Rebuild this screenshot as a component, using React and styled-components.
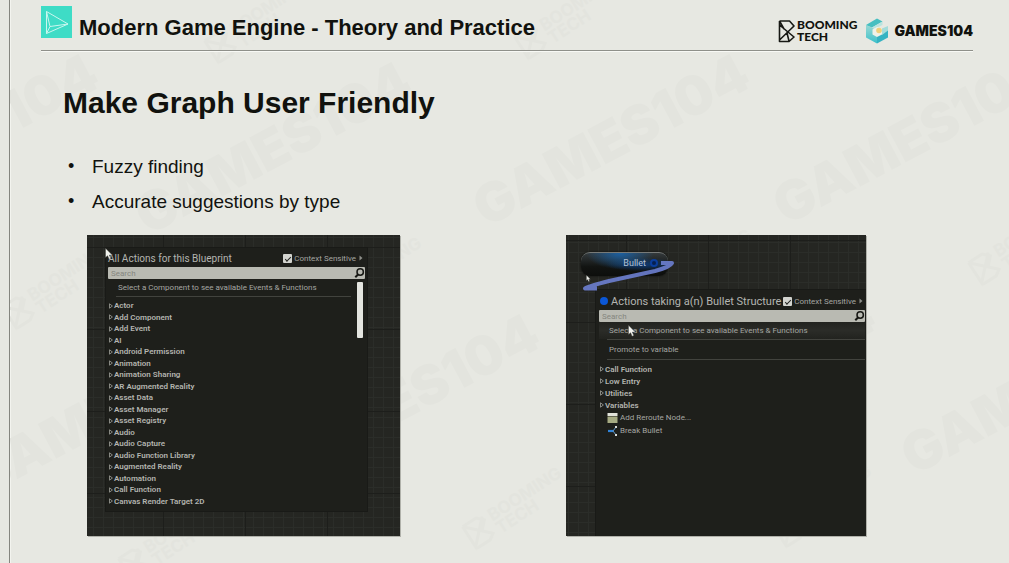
import React from "react";
import styled, { createGlobalStyle } from "styled-components";

const GlobalStyle = createGlobalStyle`
  *, *::before, *::after { box-sizing: border-box; }
  body {
    margin: 0;
    background: #e7e8e2;
    font-family: "Liberation Sans", Arial, sans-serif;
    color: #11120e;
  }
  button, input { font: inherit; color: inherit; }
`;

const Slide = styled.div`
  position: relative;
  min-height: 100vh;
  margin-left: 9px;
  border-left: 1px solid #85867f;
  padding: 0 36px 24px 31px;
  overflow: hidden;
  box-shadow: inset 1px 0 0 #f3f4ef;
`;

const Watermark = styled.svg`
  position: absolute;
  top: 0;
  left: -10px;
  width: 1009px;
  height: 563px;
  pointer-events: none;
  font-family: Inter, sans-serif;
  font-weight: 900;
  fill: #e3e4de;
`;

const Header = styled.header`
  position: relative;
  display: flex;
  align-items: flex-start;
  height: 51px;
  padding-top: 6px;
  border-bottom: 1px solid #8f908a;
  box-shadow: 0 1px 0 #f8f9f5;
`;

const CourseIcon = styled.svg`
  width: 31px;
  height: 32px;
  margin-right: 7px;
  flex: none;
`;

const CourseTitle = styled.div`
  font-size: 22px;
  font-weight: 700;
  line-height: 44px;
  height: 44px;
  white-space: nowrap;
`;

const Brands = styled.div`
  display: flex;
  align-items: center;
  height: 28px;
  margin-top: 11px;
  margin-left: auto;
  font-family: Inter, sans-serif;
`;

const BoomingMark = styled.svg`
  width: 17px;
  height: 23px;
  margin-right: 2px;
`;

const BoomingName = styled.div`
  font-family: Lato, sans-serif;
  font-size: 12px;
  font-weight: 900;
  line-height: 12px;
  margin-right: 8px;
`;

const Cube = styled.svg`
  width: 24px;
  height: 26px;
  margin-right: 5px;
`;

const GamesName = styled.div`
  font-size: 14px;
  font-weight: 900;
  line-height: 20px;
`;

const Main = styled.main`
  position: relative;
`;

const Heading = styled.h1`
  margin: 34px 0 0 22px;
  font-size: 30px;
  line-height: 36px;
`;

const Points = styled.ul`
  margin: 28px 0 0 22px;
  padding: 0 0 0 29px;
  font-size: 19px;
  line-height: 35px;
`;

const Point = styled.li`
  list-style: none;
  display: flex;
  margin-left: -24px;
  &::before {
    content: "•";
    width: 24px;
    font-size: 18px;
  }
`;

const Figures = styled.div`
  display: grid;
  grid-template-columns: 313fr 300fr;
  gap: 166px;
  margin: 16px 107px 0 46px;
`;

const Canvas = styled.section`
  position: relative;
  display: flex;
  flex-direction: column;
  min-width: 0;
  min-height: 301px;
  padding: ${(p) => p.$pad};
  overflow: hidden;
  color: #a5a6a2;
  font-family: Roboto, sans-serif;
  background-color: #252622;
  background-image:
    linear-gradient(to right, #1d1e1b 1px, transparent 1px),
    linear-gradient(to bottom, #1d1e1b 1px, transparent 1px),
    linear-gradient(to right, #2b2d29 1px, transparent 1px),
    linear-gradient(to bottom, #2b2d29 1px, transparent 1px);
  background-size: 82px 82px, 82px 82px, 10px 10px, 10px 10px;
  background-position: ${(p) => p.$origin};
`;

const Frame = styled.div`
  display: grid;
  grid-template-columns: minmax(0, 1fr);
  box-shadow: 1px 1px 0 #b0b1aa;
`;

const Menu = styled.div`
  flex: 1;
  min-width: 0;
  display: flex;
  flex-direction: column;
  padding: ${(p) => p.$pad};
  background: #1e1f1b;
  box-shadow: 0 0 0 1px #191a17;
`;

const MenuOffset = styled.div`
  flex: 1;
  display: flex;
  padding-left: 30px;
`;

const MenuHead = styled.div`
  display: flex;
  align-items: center;
  height: 18px;
  white-space: nowrap;
`;

const TypeDot = styled.span`
  width: 8px;
  height: 8px;
  margin: 0 3px 0 1px;
  border-radius: 50%;
  background: #0b57d6;
`;

const MenuTitle = styled.h2`
  margin: 0;
  font-size: ${(p) => p.$size};
  font-weight: 400;
  color: #b4b5b1;
`;

const Context = styled.label`
  display: flex;
  align-items: center;
  gap: 2px;
  margin-left: auto;
  font-size: 8px;
`;

const Tick = styled.input`
  appearance: none;
  display: grid;
  place-items: center;
  width: 9px;
  height: 9px;
  margin: 0;
  border-radius: 1px;
  background: #d3d4cf;
  &:checked::after {
    content: "";
    width: 6px;
    height: 3px;
    border: solid #22231f;
    border-width: 0 0 1px 1px;
    transform: rotate(-45deg);
  }
`;

const HeadArrow = styled.svg`
  width: 4px;
  height: 6px;
  margin: 0 2px 0 1px;
`;

const SearchBar = styled.div`
  display: flex;
  align-items: center;
  height: 12px;
  background: #b9bab2;
  border-radius: 1px;
`;

const SearchInput = styled.input`
  flex: 1;
  min-width: 0;
  height: 12px;
  padding: 0 3px;
  border: 0;
  background: none;
  font-size: 8px;
  &::placeholder { color: #85867f; opacity: 1; }
`;

const SearchButton = styled.button`
  width: 11px;
  height: 12px;
  padding: 0;
  border: 0;
  background: none;
  svg { display: block; width: 11px; height: 12px; }
`;

const Scroller = styled.div`
  flex: 1;
  display: flex;
`;

const Content = styled.div`
  flex: 1;
  display: flex;
  flex-direction: column;
`;

const ScrollTrack = styled.div`
  width: 10px;
  padding: 3px 2px;
`;

const ScrollThumb = styled.div`
  height: 56px;
  border-radius: 1px;
  background: #e4e5e0;
`;

const Note = styled.p`
  margin: 0;
  padding-left: 10px;
  font-size: 8px;
  line-height: ${(p) => p.$height};
  white-space: nowrap;
  background: ${(p) => (p.$hover ? "linear-gradient(#22231f, #2b2c28 50%, #22231f)" : "none")};
`;

const Rule = styled.hr`
  width: calc(100% - ${(p) => p.$inset});
  height: 1px;
  margin: 0 0 0 8px;
  border: 0;
  background: #42433e;
`;

const Categories = styled.ul`
  flex: ${(p) => (p.$fill ? 1 : "none")};
  display: grid;
  grid-auto-rows: ${(p) => (p.$fill ? "1fr" : "12px")};
  margin: 3px 0 0;
  padding: 0;
  list-style: none;
`;

const CategoryItem = styled.li`
  display: flex;
  align-items: center;
  min-height: 11px;
`;

const CategoryButton = styled.button`
  display: flex;
  align-items: center;
  gap: 1px;
  padding: 0 0 0 1px;
  border: 0;
  background: none;
  font-size: 8px;
  font-weight: 600;
  line-height: 11px;
  color: #b3b4af;
  white-space: nowrap;
  svg { width: 4px; height: 6px; }
`;

const ActionButton = styled.button`
  display: flex;
  align-items: center;
  gap: 2px;
  height: 13px;
  padding: 0 0 0 8px;
  border: 0;
  background: none;
  font-size: 8px;
  white-space: nowrap;
  svg { width: 11px; height: 10px; }
`;

const Overlay = styled.svg`
  position: absolute;
  left: ${(p) => p.$x};
  top: ${(p) => p.$y};
  width: ${(p) => p.$w};
  height: ${(p) => p.$h};
  pointer-events: none;
`;

const GraphNode = styled.div`
  display: flex;
  align-items: center;
  justify-content: flex-end;
  gap: 4px;
  width: 87px;
  height: 24px;
  margin: 0 0 14px 15px;
  padding: 0 10px 4px 0;
  border-radius: 9px;
  border-top: 1px solid #777a78;
  font-size: 9px;
  color: #b5c2d4;
  background:
    radial-gradient(ellipse at 45% 0, #1b5fa0 0, transparent 50%),
    radial-gradient(ellipse at 70% 50%, #0e3c78 0, transparent 42%),
    linear-gradient(#343a3c, #121412 60%, #0d0e0c);
  box-shadow: 0 0 2px #0a0b09;
`;

const Pin = styled.span`
  width: 8px;
  height: 8px;
  border: 2px solid #0a3d9c;
  border-radius: 50%;
  background: #06204f;
`;

const SearchGlyph = () => (
  <svg viewBox="0 0 11 12" fill="none" stroke="#171814">
    <circle cx="6.2" cy="5" r="3.2" strokeWidth="1.5" />
    <path d="M4 7.5 1.3 10.3" strokeWidth="2" />
  </svg>
);

const Expander = () => (
  <svg viewBox="0 0 4 6" fill="none" stroke="#a1a29c" strokeWidth="0.8">
    <path d="M.5 .8 3.4 3 .5 5.2Z" />
  </svg>
);

const Cursor = (props) => (
  <Overlay viewBox="0 0 8 12" {...props}>
    <path d="M.5 .3v9.2l2.1-1.8 1.5 3.6 1.7-.7-1.5-3.5h3Z" fill="#f1f2ed" stroke="#3b3c38" strokeWidth=".4" />
  </Overlay>
);

function Head({ title, size, dot, id }) {
  return (
    <>
      <MenuHead>
        {dot && <TypeDot />}
        <MenuTitle $size={size}>{title}</MenuTitle>
        <Context htmlFor={id}>
          <Tick type="checkbox" id={id} defaultChecked />
          Context Sensitive
          <HeadArrow viewBox="0 0 4 6"><path d="M.5 .5 3.5 3 .5 5.5Z" fill="#8e8f8a" /></HeadArrow>
        </Context>
      </MenuHead>
      <SearchBar>
        <SearchInput type="text" placeholder="Search" aria-label="Search actions" />
        <SearchButton type="button" aria-label="Search"><SearchGlyph /></SearchButton>
      </SearchBar>
    </>
  );
}

function CategoryList({ items, fill }) {
  return (
    <Categories $fill={fill}>
      {items.map((name) => (
        <CategoryItem key={name}>
          <CategoryButton type="button"><Expander />{name}</CategoryButton>
        </CategoryItem>
      ))}
    </Categories>
  );
}

const allActions = [
  "Actor", "Add Component", "Add Event", "AI", "Android Permission", "Animation",
  "Animation Sharing", "AR Augmented Reality", "Asset Data", "Asset Manager",
  "Asset Registry", "Audio", "Audio Capture", "Audio Function Library",
  "Augmented Reality", "Automation", "Call Function", "Canvas Render Target 2D",
];

const bulletActions = ["Call Function", "Low Entry", "Utilities", "Variables"];

const gamesMarks = [[-165, 228], [148, 236], [486, 228], [786, 226], [-18, 498], [276, 488], [612, 470], [914, 476]];
const boomingMarks = [[216, 62], [526, 58], [14, 328], [334, 318], [664, 310], [980, 284], [474, 548], [130, 580], [784, 546]];

export default function App() {
  return (
    <>
      <GlobalStyle />
      <Slide>
        <Watermark viewBox="0 0 1009 563" aria-hidden="true">
          {gamesMarks.map(([x, y]) => (
            <text key={`${x},${y}`} transform={`translate(${x} ${y}) rotate(-28)`} fontSize="54">GAMES104</text>
          ))}
          {boomingMarks.map(([x, y]) => (
            <g key={`${x},${y}`} transform={`translate(${x} ${y}) rotate(-33)`}>
              <path d="M2-24v24l22-22M2-24l22 22M2-24h16l6 6-8 8 8 8-6 4H2" fill="none" stroke="#e3e4de" strokeWidth="3" />
              <text x="30" y="-12" fontSize="17" fontWeight="700">BOOMING</text>
              <text x="30" y="3" fontSize="17" fontWeight="700">TECH</text>
            </g>
          ))}
        </Watermark>
        <Header>
          <CourseIcon viewBox="0 0 31 32">
            <rect width="31" height="32" fill="#3edcc6" />
            <path d="M5.5 5.5 27 18 5.5 27.5ZM5.5 5.5 9 20.5 5.5 27.5M9 20.5 27 18" fill="none" stroke="#c9f7ef" strokeWidth="1" strokeLinejoin="round" />
          </CourseIcon>
          <CourseTitle>Modern Game Engine - Theory and Practice</CourseTitle>
          <Brands>
            <BoomingMark viewBox="0 0 17 23" fill="none" stroke="#171814" strokeWidth="1.6" strokeLinejoin="round">
              <path d="M1.500 1H11.500L16 6 1.500 20V1M1.500 5 16 17l-5 4.500H1.500V19M1.500 1 6 9M9 13l2 8" />
            </BoomingMark>
            <BoomingName>BOOMING<br />TECH</BoomingName>
            <Cube viewBox="0 0 24 26">
              <defs>
                <linearGradient id="cubeFace" x1="0" y1="0" x2="0" y2="1">
                  <stop offset="0" stopColor="#9ad9d4" />
                  <stop offset="1" stopColor="#3bc0ca" />
                </linearGradient>
              </defs>
              <path d="M1 7 12 12v13.500L1 19.500Z" fill="url(#cubeFace)" />
              <path d="M12 18 23 11v8.500L12 25.500Z" fill="#35b3c2" />
              <path d="M17 10.500 23 8v4.500L17 17Z" fill="#a4dcda" />
              <path d="M1 7 12 .5 17.500 3.500 7 9.500Z" fill="#46bfc1" />
              <path d="M7 9.500 17.500 3.500V7L10 10.500Z" fill="#b9e4df" />
              <path d="M7.500 11.500 12 9l5 1.500v6L12 19l-4.500-2.500Z" fill="#eff1e8" />
              <circle cx="14" cy="12.500" r="2.800" fill="#efd07a" />
            </Cube>
            <GamesName>GAMES104</GamesName>
          </Brands>
        </Header>
        <Main>
          <Heading>Make Graph User Friendly</Heading>
          <Points>
            <Point>Fuzzy finding</Point>
            <Point>Accurate suggestions by type</Point>
          </Points>
          <Figures>
            <Frame>
              <Canvas $pad="13px 33px 25px 19px" $origin="76px 0, 0 12px, 6px 0, 0 2px">
                <Menu $pad="1px 2px 4px">
                  <Head title="All Actions for this Blueprint" size="10px" id="context-all" />
                  <Scroller>
                    <Content>
                      <Note $height="17px">Select a Component to see available Events &amp; Functions</Note>
                      <Rule $inset="12px" />
                      <CategoryList items={allActions} fill />
                    </Content>
                    <ScrollTrack><ScrollThumb /></ScrollTrack>
                  </Scroller>
                </Menu>
                <Cursor $x="18px" $y="13px" $w="8px" $h="12px" />
              </Canvas>
            </Frame>
            <Frame>
              <Canvas $pad="17px 0 0" $origin="60px 0, 0 5px, 2px 0, 0 7px">
                <GraphNode>Bullet<Pin /></GraphNode>
                <MenuOffset>
                  <Menu $pad="2px 1px 0 3px">
                    <Head title="Actions taking a(n) Bullet Structure" size="11px" dot id="context-bullet" />
                    <Content>
                      <Note $height="17px" $hover>Select a Component to see available Events &amp; Functions</Note>
                      <Rule $inset="8px" />
                      <Note $height="19px">Promote to variable</Note>
                      <Rule $inset="8px" />
                      <CategoryList items={bulletActions} />
                      <ActionButton type="button">
                        <svg viewBox="0 0 11 10"><path d="M.5 0h10v3H.5z" fill="#e2e3da" /><path d="M.5 3.500h10V10H.5z" fill="#a6ab83" /></svg>
                        Add Reroute Node...
                      </ActionButton>
                      <ActionButton type="button">
                        <svg viewBox="0 0 11 10" fill="none"><path d="M1 5h5" stroke="#2f83d8" strokeWidth="2.200" /><path d="M9 1 6 5l3 4" stroke="#5d9ad0" /><path d="M8 0h2v2H8zM8 8h2v2H8z" fill="#d8dbd8" /></svg>
                        Break Bullet
                      </ActionButton>
                    </Content>
                  </Menu>
                </MenuOffset>
                <Overlay $x="15px" $y="23px" $w="96px" $h="34px" viewBox="0 0 96 34" fill="none">
                  <path d="M80 5h11q-2 4-17 8L28 23Q8 28 4 30.500h12" stroke="#6d7fd0" strokeWidth="4" strokeLinejoin="round" opacity=".9" />
                </Overlay>
                <Cursor $x="20px" $y="40px" $w="5px" $h="7px" />
                <Cursor $x="62px" $y="90px" $w="8px" $h="12px" />
              </Canvas>
            </Frame>
          </Figures>
        </Main>
      </Slide>
    </>
  );
}
